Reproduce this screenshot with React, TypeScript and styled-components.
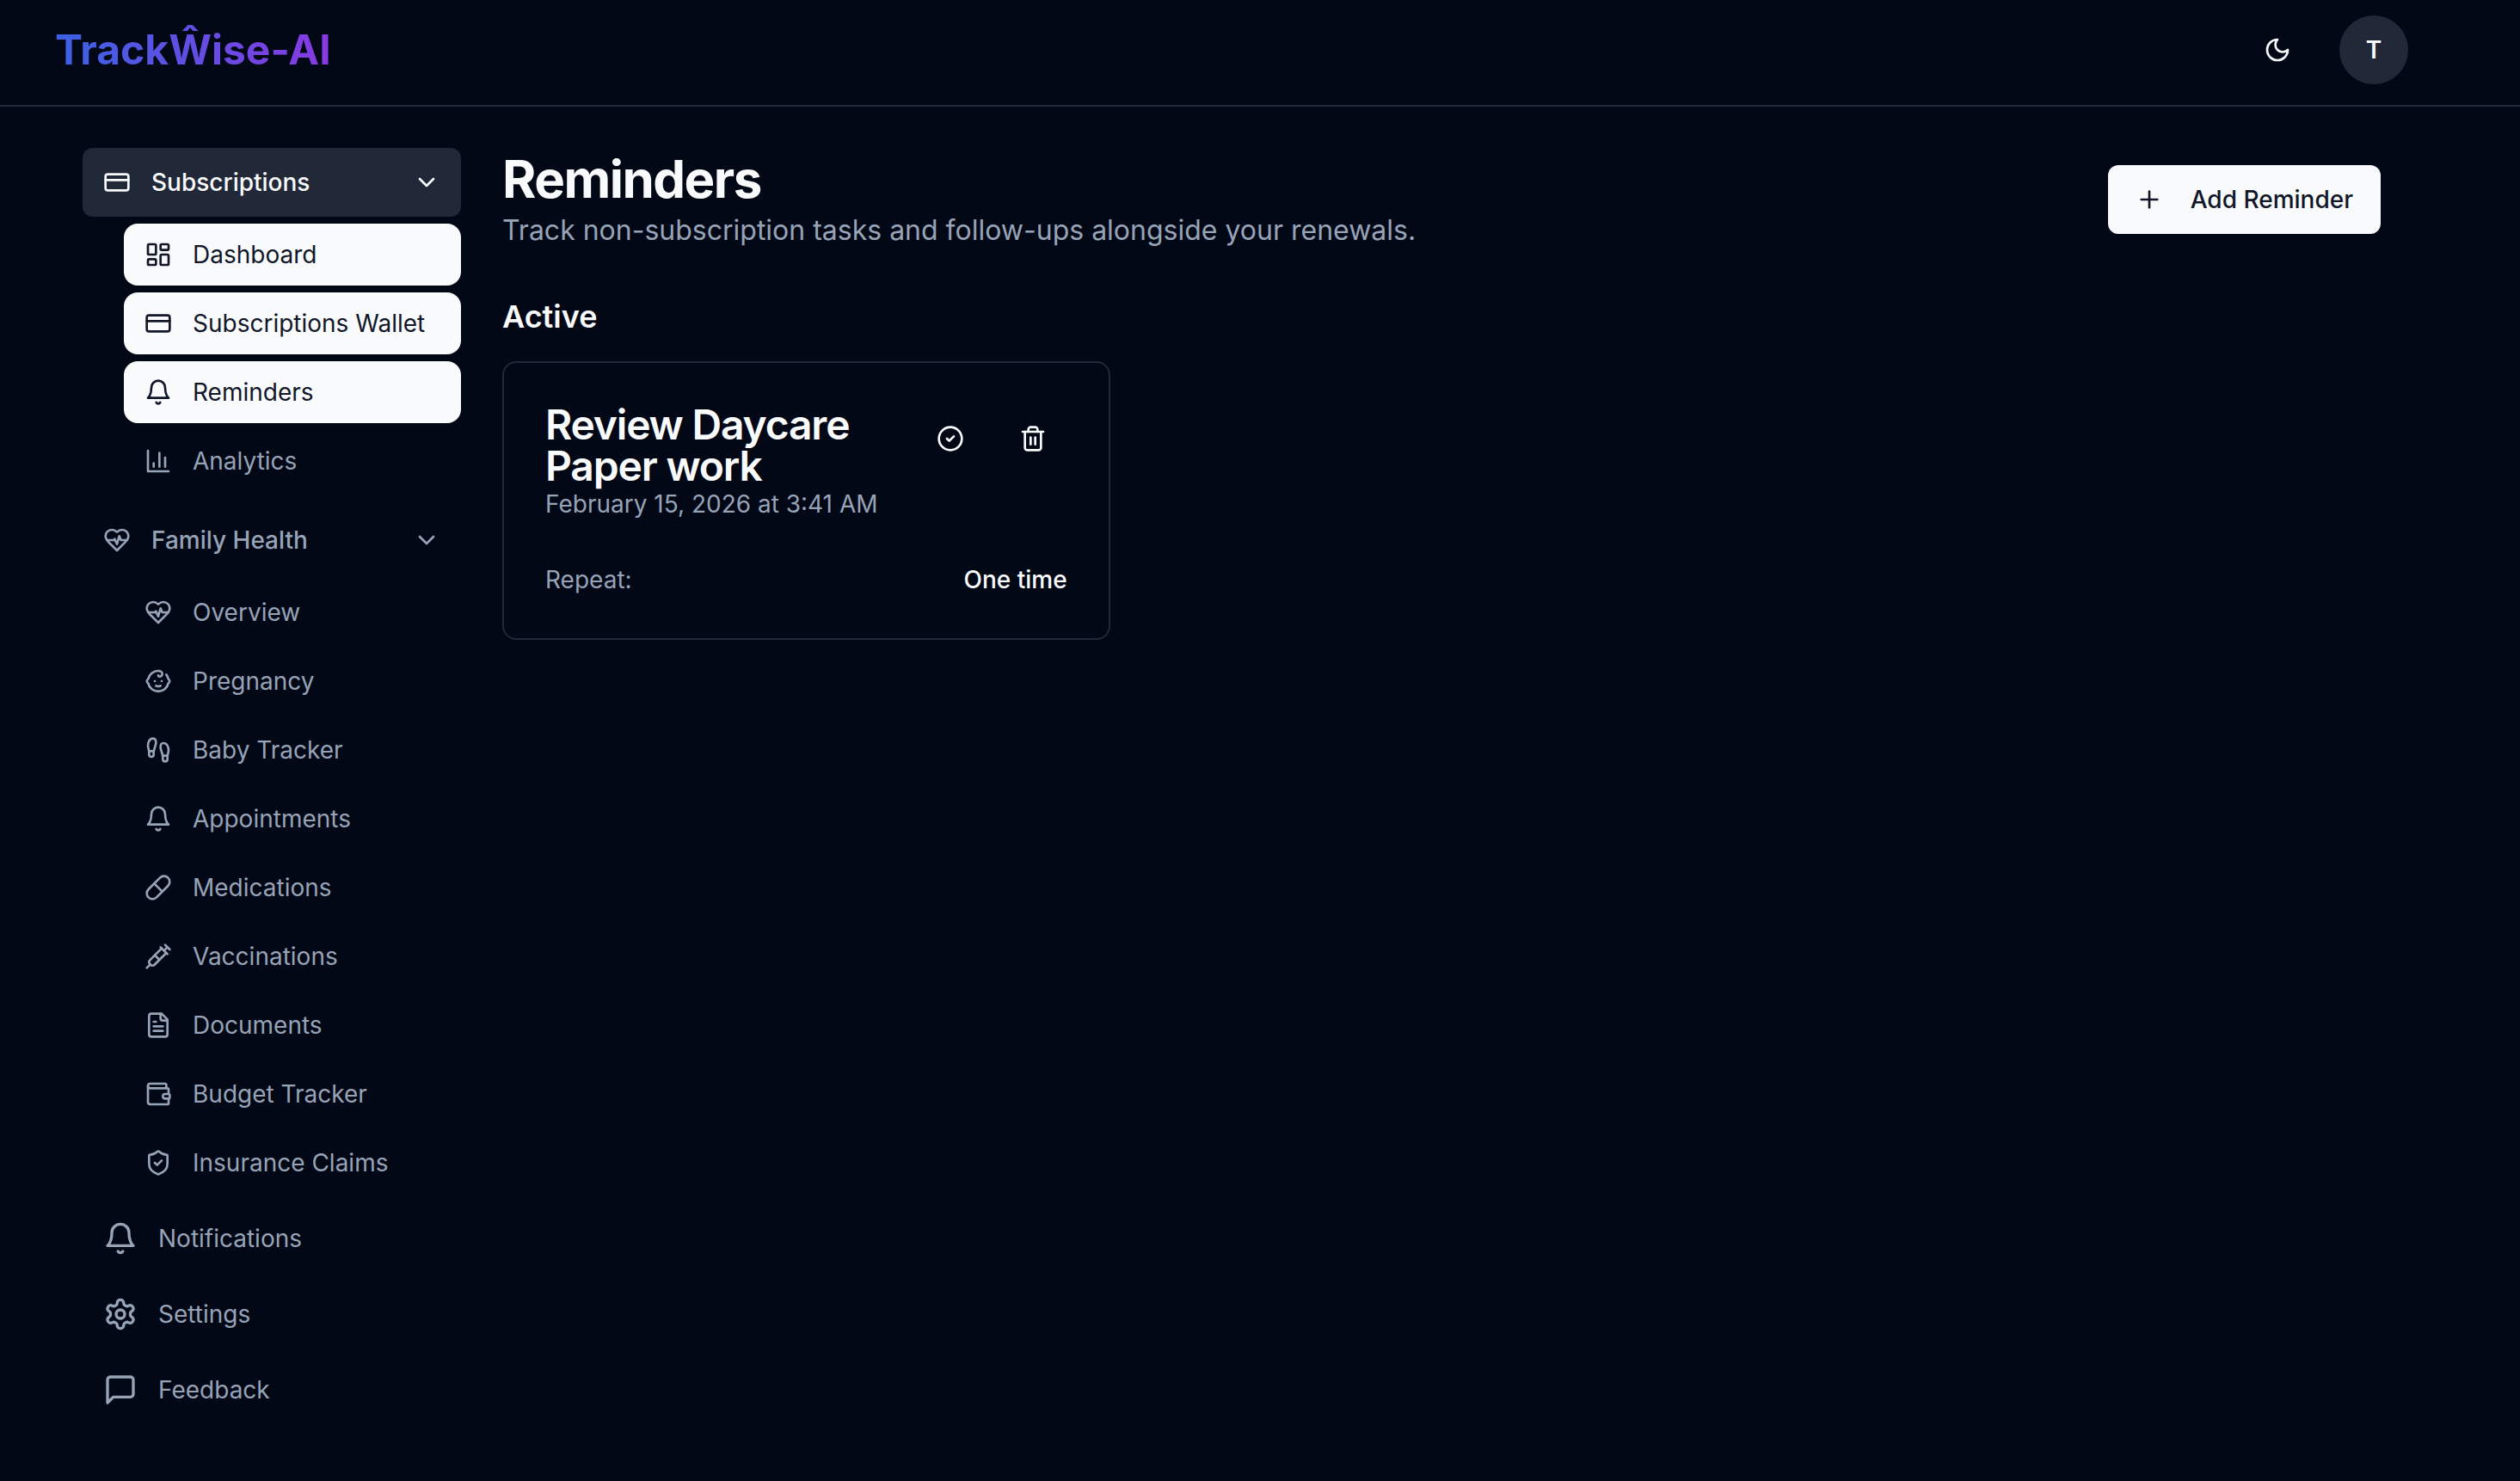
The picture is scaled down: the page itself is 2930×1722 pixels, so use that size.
import type { ComponentType, ReactNode } from "react"
import styled, { createGlobalStyle } from "styled-components"
import {
    ChevronDown,
    CircleCheck,
    CreditCard,
    Footprints,
    LayoutDashboard,
    Pill,
    Plus,
    ShieldCheck,
    Syringe,
} from "lucide-react"

const GlobalStyle = createGlobalStyle`
    * {
        box-sizing: border-box;
    }
    body {
        margin: 0;
        background: #030816;
        color: #f9fafc;
        font-family: Inter, "Liberation Sans", sans-serif;
        font-size: 28px;
        line-height: 40px;
    }
    h1, h2, h3, p {
        margin: 0;
    }
    button {
        font: inherit;
        color: inherit;
        border: none;
        background: transparent;
        cursor: pointer;
    }
`

const Page = styled.div`
    display: flex;
    flex-direction: column;
    min-height: 100vh;
`
const Header = styled.header`
    display: flex;
    align-items: center;
    justify-content: space-between;
    height: 124px;
    padding: 0 130px 6px 64px;
    border-bottom: 2px solid #212939;
`
const Logo = styled.span`
    font-size: 48px;
    line-height: 64px;
    font-weight: 700;
    background: linear-gradient(to right, #3b62e3, #883ae2);
    background-clip: text;
    -webkit-background-clip: text;
    color: transparent;
`
const HeaderActions = styled.div`
    display: flex;
    align-items: center;
    gap: 32px;
`
const IconBtn = styled.button`
    display: flex;
    align-items: center;
    justify-content: center;
    width: 80px;
    height: 80px;
    padding: 0;
    border-radius: 12px;
`
const Avatar = styled.div`
    display: flex;
    align-items: center;
    justify-content: center;
    width: 80px;
    height: 80px;
    border-radius: 50%;
    background: #212939;
    font-weight: 600;
`
const Body = styled.div`
    display: flex;
    gap: 48px;
    padding: 48px 162px 48px 96px;
`
const Sidebar = styled.nav`
    display: flex;
    flex-direction: column;
    flex-shrink: 0;
    gap: 16px;
    width: 440px;
`
const Group = styled.div`
    display: flex;
    flex-direction: column;
    gap: 8px;
`
const GroupBtn = styled.button<{ $active?: boolean }>`
    display: flex;
    align-items: center;
    justify-content: space-between;
    height: 80px;
    padding: 0 24px;
    border-radius: 12px;
    font-weight: 500;
    background: ${({ $active }) => ($active ? "#212939" : "transparent")};
    color: ${({ $active }) => ($active ? "#f9fafc" : "#97a3b6")};
`
const GroupLabel = styled.span`
    display: flex;
    align-items: center;
    gap: 24px;
`
const NavList = styled.div`
    display: flex;
    flex-direction: column;
    gap: 8px;
    padding-left: 48px;
`
const NavItem = styled.a<{ $active?: boolean }>`
    display: flex;
    align-items: center;
    gap: 24px;
    height: 72px;
    padding: 0 24px;
    border-radius: 16px;
    white-space: nowrap;
    background: ${({ $active }) => ($active ? "#f9fafc" : "transparent")};
    color: ${({ $active }) => ($active ? "#111729" : "#97a3b6")};
`
const Main = styled.main`
    flex: 1;
    min-width: 0;
`
const TitleRow = styled.div`
    display: flex;
    align-items: center;
    justify-content: space-between;
    margin-bottom: 48px;
`
const Title = styled.h1`
    font-size: 60px;
    line-height: 72px;
    font-weight: 700;
    letter-spacing: -0.025em;
`
const Subtitle = styled.p`
    font-size: 32px;
    line-height: 48px;
    color: #97a3b6;
`
const AddBtn = styled.button`
    display: flex;
    align-items: center;
    gap: 32px;
    height: 80px;
    padding: 0 32px;
    border-radius: 12px;
    background: #f9fafc;
    color: #111729;
    font-weight: 500;
`
const SectionTitle = styled.h2`
    margin-bottom: 24px;
    font-size: 36px;
    line-height: 56px;
    font-weight: 600;
`
const CardGrid = styled.div`
    display: grid;
    grid-template-columns: repeat(3, minmax(0, 1fr));
    gap: 32px;
`
const Card = styled.article`
    padding: 48px;
    border: 2px solid #212939;
    border-radius: 16px;
`
const CardHeader = styled.div`
    display: flex;
    align-items: flex-start;
    justify-content: space-between;
    margin-bottom: 48px;
`
const CardTitle = styled.h3`
    font-size: 48px;
    line-height: 48px;
    font-weight: 600;
    letter-spacing: -0.025em;
`
const CardActions = styled.div`
    display: flex;
    gap: 16px;
`
const CardRow = styled.div`
    display: flex;
    justify-content: space-between;
`
const Muted = styled.p`
    color: #97a3b6;
`
const Strong = styled.span`
    font-weight: 500;
`

type IconProps = { size?: number }

const Svg = ({ size = 32, children }: IconProps & { children: ReactNode }) => (
    <svg
        width={size}
        height={size}
        viewBox="0 0 24 24"
        fill="none"
        stroke="currentColor"
        strokeWidth="2"
        strokeLinecap="round"
        strokeLinejoin="round"
    >
        {children}
    </svg>
)

const BellIcon = ({ size }: IconProps) => (
    <Svg size={size}>
        <path d="M6 8a6 6 0 0 1 12 0c0 7 3 9 3 9H3s3-2 3-9" />
        <path d="M10.3 21a1.94 1.94 0 0 0 3.4 0" />
    </Svg>
)
const MoonIcon = ({ size }: IconProps) => (
    <Svg size={size}>
        <path d="M12 3a6 6 0 0 0 9 9 9 9 0 1 1-9-9Z" />
    </Svg>
)
const ChartIcon = ({ size }: IconProps) => (
    <Svg size={size}>
        <path d="M3 3v18h18" />
        <path d="M18 17V9" />
        <path d="M13 17V5" />
        <path d="M8 17v-3" />
    </Svg>
)
const HeartIcon = ({ size }: IconProps) => (
    <Svg size={size}>
        <path d="M19 14c1.49-1.46 3-3.21 3-5.5A5.5 5.5 0 0 0 16.5 3c-1.76 0-3 .5-4.5 2-1.5-1.5-2.74-2-4.5-2A5.5 5.5 0 0 0 2 8.5c0 2.3 1.5 4.05 3 5.5l7 7Z" />
        <path d="M3.22 12H9.5l.5-1 2 4.5 2-7 1.5 3.5h5.27" />
    </Svg>
)
const BabyIcon = ({ size }: IconProps) => (
    <Svg size={size}>
        <path d="M9 12h.01" />
        <path d="M15 12h.01" />
        <path d="M10 16c.5.3 1.2.5 2 .5s1.5-.2 2-.5" />
        <path d="M19 6.3a9 9 0 0 1 1.8 3.9 2 2 0 0 1 0 3.6 9 9 0 0 1-17.6 0 2 2 0 0 1 0-3.6A9 9 0 0 1 12 3c2 0 3.5 1.1 3.5 2.5s-.9 2.5-2 2.5c-.8 0-1.5-.4-1.5-1" />
    </Svg>
)
const FileIcon = ({ size }: IconProps) => (
    <Svg size={size}>
        <path d="M15 2H6a2 2 0 0 0-2 2v16a2 2 0 0 0 2 2h12a2 2 0 0 0 2-2V7Z" />
        <path d="M14 2v4a2 2 0 0 0 2 2h4" />
        <path d="M10 9H8" />
        <path d="M16 13H8" />
        <path d="M16 17H8" />
    </Svg>
)
const WalletIcon = ({ size }: IconProps) => (
    <Svg size={size}>
        <path d="M19 7V4a1 1 0 0 0-1-1H5a2 2 0 0 0 0 4h15a1 1 0 0 1 1 1v4h-3a2 2 0 0 0 0 4h3a1 1 0 0 0 1-1v-2a1 1 0 0 0-1-1" />
        <path d="M3 5v14a2 2 0 0 0 2 2h15a1 1 0 0 0 1-1v-4" />
    </Svg>
)
const GearIcon = ({ size }: IconProps) => (
    <Svg size={size}>
        <path d="M12.22 2h-.44a2 2 0 0 0-2 2v.18a2 2 0 0 1-1 1.73l-.43.25a2 2 0 0 1-2 0l-.15-.08a2 2 0 0 0-2.73.73l-.22.38a2 2 0 0 0 .73 2.73l.15.1a2 2 0 0 1 1 1.72v.51a2 2 0 0 1-1 1.74l-.15.09a2 2 0 0 0-.73 2.73l.22.38a2 2 0 0 0 2.73.73l.15-.08a2 2 0 0 1 2 0l.43.25a2 2 0 0 1 1 1.73V20a2 2 0 0 0 2 2h.44a2 2 0 0 0 2-2v-.18a2 2 0 0 1 1-1.73l.43-.25a2 2 0 0 1 2 0l.15.08a2 2 0 0 0 2.73-.73l.22-.39a2 2 0 0 0-.73-2.73l-.15-.08a2 2 0 0 1-1-1.74v-.5a2 2 0 0 1 1-1.74l.15-.09a2 2 0 0 0 .73-2.73l-.22-.38a2 2 0 0 0-2.73-.73l-.15.08a2 2 0 0 1-2 0l-.43-.25a2 2 0 0 1-1-1.73V4a2 2 0 0 0-2-2z" />
        <circle cx="12" cy="12" r="3" />
    </Svg>
)
const MessageIcon = ({ size }: IconProps) => (
    <Svg size={size}>
        <path d="M21 15a2 2 0 0 1-2 2H7l-4 4V5a2 2 0 0 1 2-2h14a2 2 0 0 1 2 2z" />
    </Svg>
)
const TrashIcon = ({ size }: IconProps) => (
    <Svg size={size}>
        <path d="M3 6h18" />
        <path d="M19 6v14c0 1-1 2-2 2H7c-1 0-2-1-2-2V6" />
        <path d="M8 6V4c0-1 1-2 2-2h4c1 0 2 1 2 2v2" />
        <path d="M10 11v6" />
        <path d="M14 11v6" />
    </Svg>
)

type NavLink = {
    label: string
    icon: ComponentType<IconProps>
    active?: boolean
}
type NavGroup = NavLink & { items: NavLink[] }

const groups: NavGroup[] = [
    {
        label: "Subscriptions",
        icon: CreditCard,
        active: true,
        items: [
            { label: "Dashboard", icon: LayoutDashboard, active: true },
            { label: "Subscriptions Wallet", icon: CreditCard, active: true },
            { label: "Reminders", icon: BellIcon, active: true },
            { label: "Analytics", icon: ChartIcon },
        ],
    },
    {
        label: "Family Health",
        icon: HeartIcon,
        items: [
            { label: "Overview", icon: HeartIcon },
            { label: "Pregnancy", icon: BabyIcon },
            { label: "Baby Tracker", icon: Footprints },
            { label: "Appointments", icon: BellIcon },
            { label: "Medications", icon: Pill },
            { label: "Vaccinations", icon: Syringe },
            { label: "Documents", icon: FileIcon },
            { label: "Budget Tracker", icon: WalletIcon },
            { label: "Insurance Claims", icon: ShieldCheck },
        ],
    },
]

const links: NavLink[] = [
    { label: "Notifications", icon: BellIcon },
    { label: "Settings", icon: GearIcon },
    { label: "Feedback", icon: MessageIcon },
]

const reminders = [
    {
        id: 1,
        title: "Review Daycare Paper work",
        date: "February 15, 2026 at 3:41 AM",
        repeat: "One time",
    },
]

export default function App() {
    return (
        <Page>
            <GlobalStyle />
            <Header>
                <Logo>TrackŴise-AI</Logo>
                <HeaderActions>
                    <IconBtn aria-label="Toggle theme">
                        <MoonIcon size={32} />
                    </IconBtn>
                    <Avatar>T</Avatar>
                </HeaderActions>
            </Header>
            <Body>
                <Sidebar>
                    {groups.map(({ label, icon: Icon, active, items }) => (
                        <Group key={label}>
                            <GroupBtn $active={active}>
                                <GroupLabel>
                                    <Icon size={32} />
                                    {label}
                                </GroupLabel>
                                <ChevronDown size={32} />
                            </GroupBtn>
                            <NavList>
                                {items.map(({ label, icon: ItemIcon, active }) => (
                                    <NavItem key={label} $active={active}>
                                        <ItemIcon size={32} />
                                        {label}
                                    </NavItem>
                                ))}
                            </NavList>
                        </Group>
                    ))}
                    {links.map(({ label, icon: Icon }) => (
                        <NavItem key={label}>
                            <Icon size={40} />
                            {label}
                        </NavItem>
                    ))}
                </Sidebar>
                <Main>
                    <TitleRow>
                        <div>
                            <Title>Reminders</Title>
                            <Subtitle>Track non-subscription tasks and follow-ups alongside your renewals.</Subtitle>
                        </div>
                        <AddBtn>
                            <Plus size={32} />
                            Add Reminder
                        </AddBtn>
                    </TitleRow>
                    <SectionTitle>Active</SectionTitle>
                    <CardGrid>
                        {reminders.map(reminder => (
                            <Card key={reminder.id}>
                                <CardHeader>
                                    <div>
                                        <CardTitle>{reminder.title}</CardTitle>
                                        <Muted>{reminder.date}</Muted>
                                    </div>
                                    <CardActions>
                                        <IconBtn aria-label="Complete">
                                            <CircleCheck size={32} />
                                        </IconBtn>
                                        <IconBtn aria-label="Delete">
                                            <TrashIcon size={32} />
                                        </IconBtn>
                                    </CardActions>
                                </CardHeader>
                                <CardRow>
                                    <Muted>Repeat:</Muted>
                                    <Strong>{reminder.repeat}</Strong>
                                </CardRow>
                            </Card>
                        ))}
                    </CardGrid>
                </Main>
            </Body>
        </Page>
    )
}
